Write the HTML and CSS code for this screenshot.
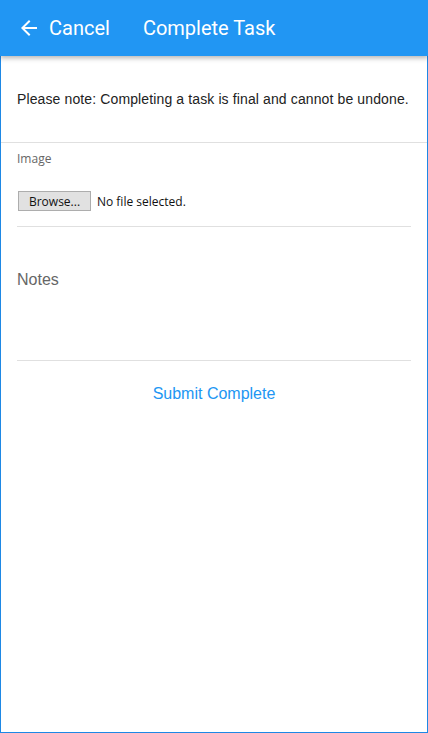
FILE: index.html
```html
<!DOCTYPE html>
<html lang="en">
<head>
    <meta charset="UTF-8">
    <meta name="viewport" content="width=device-width, initial-scale=1.0">
    <title>Complete Task</title>
    <link rel="stylesheet" href="styles.css">
</head>
<body>
    <div class="app">
        <header class="toolbar">
            <a class="back" href="#">
                <svg class="back-icon" viewBox="0 0 24 24" width="24" height="24">
                    <path d="M20 11H7.83l5.59-5.59L12 4l-8 8 8 8 1.41-1.41L7.83 13H20v-2z" fill="#fff"/>
                </svg>
                <span>Cancel</span>
            </a>
            <h1 class="title">Complete Task</h1>
        </header>

        <main class="content">
            <p class="note">Please note: Completing a task is final and cannot be undone.</p>

            <div class="field image-field">
                <label class="small-label">Image</label>
                <div class="file-row">
                    <button class="browse" type="button">Browse...</button>
                    <span class="file-name">No file selected.</span>
                </div>
            </div>

            <div class="field notes-field">
                <label class="notes-label">Notes</label>
            </div>

            <div class="actions">
                <a class="submit" href="#">Submit Complete</a>
            </div>
        </main>
    </div>
</body>
</html>
```

FILE: styles.css
```css
:root {
    --primary-color: #2196f3;
    --frame-color: #1e88e5;
    --line-color: #e0e0e0;
    --muted-color: #666;
}

html, body {
    margin: 0;
    height: 100%;
}

body {
    font-family: Arial, "Liberation Sans", sans-serif;
    background: #fff;
}

.app {
    display: flex;
    flex-direction: column;
    height: 733px;
}

/* Barra blu in alto */
.toolbar {
    height: 56px;
    flex: none;
    display: flex;
    align-items: center;
    background-color: var(--primary-color);
    color: #fff;
    box-shadow: 0 2px 5px rgba(0, 0, 0, 0.3);
    position: relative;
    z-index: 1;
}

.back {
    display: flex;
    align-items: center;
    color: #fff;
    text-decoration: none;
    font-family: Roboto, sans-serif;
    font-size: 20px;
    margin-left: 17px;
}

.back-icon {
    margin-right: 8px;
}

.title {
    margin: 0 0 0 33px;
    font-family: Roboto, sans-serif;
    font-size: 20px;
    font-weight: 400;
}

.content {
    flex: 1;
    border: 1px solid var(--frame-color);
    border-top: none;
}

.note {
    margin: 0;
    padding: 35px 16px 35px;
    font-size: 14px;
    line-height: 16px;
    letter-spacing: 0.12px;
    color: #222;
    border-bottom: 1px solid var(--line-color);
}

.field {
    box-sizing: border-box;
    margin: 0 16px;
    border-bottom: 1px solid var(--line-color);
}

.image-field {
    padding-top: 8px;
    height: 84px;
}

.small-label {
    display: block;
    font-family: "Open Sans", sans-serif;
    font-size: 12px;
    line-height: 16px;
    color: var(--muted-color);
}

.file-row {
    display: flex;
    align-items: center;
    margin-top: 24px;
    font-family: "Open Sans", sans-serif;
    font-size: 12px;
}

.browse {
    margin-left: 1px;
    width: 73px;
    height: 20px;
    padding: 0;
    background-color: #e1e1e1;
    border: 1px solid #adadad;
    font-family: "Open Sans", sans-serif;
    font-size: 12px;
    color: #111;
}

.file-name {
    margin-left: 6px;
    color: #111;
}

.notes-field {
    height: 134px;
    padding-top: 44px;
}

.notes-label {
    display: block;
    font-size: 16px;
    line-height: 18px;
    color: var(--muted-color);
}

.actions {
    text-align: center;
    padding-top: 24px;
}

.submit {
    color: var(--primary-color);
    text-decoration: none;
    font-size: 16px;
}
```
